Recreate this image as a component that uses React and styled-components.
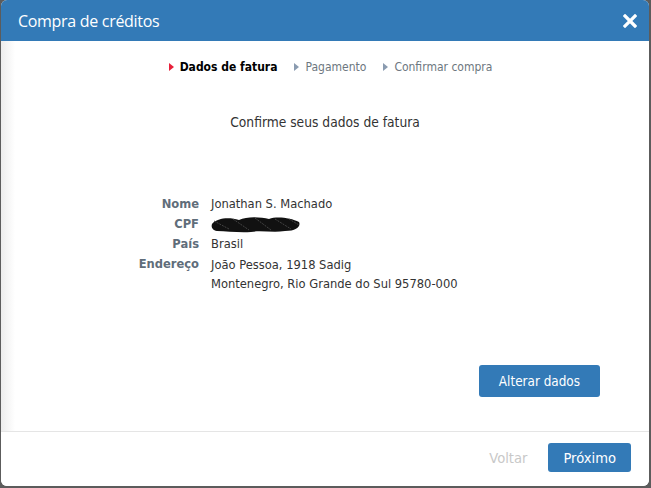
import React from 'react'
import styled, { createGlobalStyle } from 'styled-components'

const Global = createGlobalStyle`
  *, *::before, *::after {
    box-sizing: border-box;
  }
  html, body {
    margin: 0;
    padding: 0;
    background: #5c5c5c;
  }
  body {
    font-family: "DejaVu Sans Condensed", "DejaVu Sans", sans-serif;
  }
`

const Modal = styled.div`
  width: 648px;
  height: 486px;
  margin-left: 1px;
  background: #fff;
  border-radius: 6px;
  overflow: hidden;
  display: flex;
  flex-direction: column;
`

const Header = styled.div`
  height: 41px;
  flex: none;
  background: #337ab7;
  display: flex;
  align-items: center;
  justify-content: space-between;
  padding: 0 12px 0 17px;
  color: #fff;
  h1 {
    margin: 0;
    font-family: "Open Sans", "Noto Sans", sans-serif;
    font-weight: 400;
    font-size: 16px;
    letter-spacing: -0.3px;
  }
`

const Close = styled.button`
  border: 0;
  background: none;
  padding: 0;
  color: #fff;
  display: flex;
  cursor: pointer;
`

const Body = styled.div`
  flex: 1;
  display: flex;
  flex-direction: column;
  background: linear-gradient(to right, #ececec 0, #fff 14px);
`

const Steps = styled.ol`
  list-style: none;
  margin: 0;
  padding: 19px 0 0 11px;
  display: flex;
  justify-content: center;
  gap: 17px;
  font-size: 12px;
`

const Step = styled.li`
  display: flex;
  align-items: center;
  gap: 6px;
  color: ${p => (p.$active ? '#000' : '#6d7780')};
  font-weight: ${p => (p.$active ? 700 : 400)};
  &::before {
    content: '';
    width: 0;
    height: 0;
    border-style: solid;
    border-width: 4px 0 4px 5px;
    border-color: transparent transparent transparent ${p => (p.$active ? '#e8203a' : '#8a9bb0')};
  }
`

const Title = styled.h2`
  margin: 40px 0 0;
  text-align: center;
  font-size: 13.7px;
  font-weight: 400;
  color: #333;
`

const Info = styled.dl`
  margin: 64px 0 0;
  display: grid;
  grid-template-columns: 198px auto;
  column-gap: 12px;
  font-size: 12.8px;
  line-height: 20px;
  dt {
    text-align: right;
    font-weight: 700;
    color: #5f6d7a;
  }
  dd {
    margin: 0;
    color: #333;
  }
`

const Address = styled.dd`
  && {
    line-height: 19px;
    padding-top: 1px;
  }
`

const Actions = styled.div`
  display: flex;
  justify-content: flex-end;
  padding: 0 49px 0 0;
  margin-top: 72px;
`

const Button = styled.button`
  border: 0;
  border-radius: 3px;
  background: #337ab7;
  color: #fff;
  font-family: "DejaVu Sans Condensed", "DejaVu Sans", sans-serif;
  font-size: ${p => p.$fs || 13.4}px;
  height: ${p => p.$h || 32}px;
  padding: 0 ${p => p.$px || 20}px;
  cursor: pointer;
`

const Footer = styled.div`
  flex: none;
  height: 55px;
  border-top: 1px solid #e5e5e5;
  display: flex;
  align-items: center;
  justify-content: flex-end;
  gap: 21px;
  padding: 0 18px 4px 0;
  background: #fff;
`

const Back = styled.span`
  color: #c8c8c8;
  font-size: 14.6px;
`

function Scribble() {
  return (
    <svg width="90" height="17" viewBox="0 0 90 17" style={{ verticalAlign: 'middle' }}>
      <path
        d="M1 8 C6 2, 18 1, 28 4 C36 0, 50 1, 58 3 C66 0, 80 2, 88 6 C90 10, 86 15, 74 15 C62 17, 50 14, 40 16 C28 17, 16 15, 6 15 C1 14, 0 11, 1 8 Z"
        fill="#111"
      />
      <path d="M3 5 L18 13 M22 3 L38 14 M44 2 L60 14 M64 3 L80 13 M78 3 L88 9" stroke="#444" strokeWidth="1" strokeDasharray="2 1" />
    </svg>
  )
}

export default function App() {
  return (
    <>
      <Global />
      <Modal>
        <Header>
          <h1>Compra de créditos</h1>
          <Close aria-label="Fechar">
            <svg width="14" height="14" viewBox="0 0 14 14">
              <path d="M2 2 L12 12 M12 2 L2 12" stroke="#fff" strokeWidth="3.2" strokeLinecap="square" />
            </svg>
          </Close>
        </Header>
        <Body>
          <Steps>
            <Step $active>Dados de fatura</Step>
            <Step>Pagamento</Step>
            <Step>Confirmar compra</Step>
          </Steps>
          <Title>Confirme seus dados de fatura</Title>
          <Info>
            <dt>Nome</dt>
            <dd>Jonathan S. Machado</dd>
            <dt>CPF</dt>
            <dd><Scribble /></dd>
            <dt>País</dt>
            <dd>Brasil</dd>
            <dt>Endereço</dt>
            <Address>
              João Pessoa, 1918 Sadig
              <br />
              Montenegro, Rio Grande do Sul 95780-000
            </Address>
          </Info>
          <Actions>
            <Button>Alterar dados</Button>
          </Actions>
        </Body>
        <Footer>
          <Back>Voltar</Back>
          <Button $h={29} $px={15} $fs={14.6}>Próximo</Button>
        </Footer>
      </Modal>
    </>
  )
}
